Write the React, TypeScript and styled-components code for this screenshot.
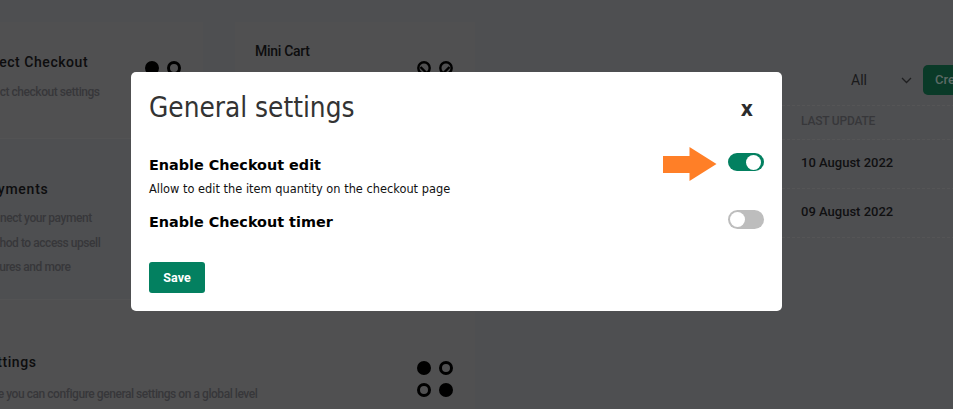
import React from 'react'
import styled, { createGlobalStyle } from 'styled-components'

const GlobalStyle = createGlobalStyle`
  html, body {
    margin: 0;
    padding: 0;
    width: 953px;
    height: 409px;
    overflow: hidden;
    background: #4e4f51;
    font-family: 'Roboto', 'Liberation Sans', sans-serif;
  }
`

const RingIcon = ({ flip }: { flip?: boolean }) => (
  <svg width="14" height="14" viewBox="0 0 14 14" fill="none">
    <circle cx="7" cy="7" r="5.7" stroke="#000" strokeWidth="2.4" />
    <path d={flip ? 'M10.5 6 4.5 12' : 'M3.5 6 9.5 12'} stroke="#000" strokeWidth="2.4" />
  </svg>
)

export default function App() {
  return (
    <>
      <GlobalStyle />
      <Page>
        <CardsArea>
          <TopRow>
            <CheckoutCard>
              <CardText>
                <CheckoutTitle>Direct Checkout</CheckoutTitle>
                <CardDesc>Direct checkout settings</CardDesc>
              </CardText>
              <Dots>
                <Dot $filled />
                <Dot />
              </Dots>
            </CheckoutCard>
            <MiniCartCard>
              <MiniCartTitle>Mini Cart</MiniCartTitle>
              <MiniCartDots>
                <RingIcon />
                <RingIcon flip />
              </MiniCartDots>
            </MiniCartCard>
          </TopRow>
          <PaymentsCard>
            <PaymentsTitle>Payments</PaymentsTitle>
            <CardDesc>Connect your payment</CardDesc>
            <CardDesc>method to access upsell</CardDesc>
            <CardDesc>features and more</CardDesc>
          </PaymentsCard>
          <SettingsCard>
            <CardText>
              <SettingsCardTitle>Settings</SettingsCardTitle>
              <CardDesc>Here you can configure general settings on a global level</CardDesc>
            </CardText>
            <DotGrid>
              <Dot $filled />
              <Dot />
              <Dot />
              <Dot $filled />
            </DotGrid>
          </SettingsCard>
        </CardsArea>
        <TablePanel>
          <Toolbar>
            <FilterSelect>
              <span>All</span>
              <svg width="11" height="7" viewBox="0 0 11 7" fill="none">
                <path d="M1 1 5.5 5.5 10 1" stroke="#1f1f20" strokeWidth="1.3" />
              </svg>
            </FilterSelect>
            <CreateButton>Create</CreateButton>
          </Toolbar>
          <TableRow $header>LAST UPDATE</TableRow>
          <TableRow>10 August 2022</TableRow>
          <TableRow>09 August 2022</TableRow>
        </TablePanel>
      </Page>
      <Modal>
        <ModalHeader>
          <ModalTitle>General settings</ModalTitle>
          <CloseButton>x</CloseButton>
        </ModalHeader>
        <SettingRow>
          <SettingTitle>Enable Checkout edit</SettingTitle>
          <Toggle $on />
        </SettingRow>
        <SettingHint>Allow to edit the item quantity on the checkout page</SettingHint>
        <SettingRow>
          <SettingTitle>Enable Checkout timer</SettingTitle>
          <Toggle />
        </SettingRow>
        <SaveButton>Save</SaveButton>
      </Modal>
      <ArrowMark width="54" height="36" viewBox="0 0 54 36">
        <path d="M0 10H26.5V1L53.5 18 26.5 35V27H0Z" fill="#ff7f27" />
      </ArrowMark>
    </>
  )
}

const Page = styled.div`
  display: flex;
  width: 1100px;
  height: 409px;
  margin-left: -20px;
  gap: 22px;
`

const CardsArea = styled.div`
  width: 495px;
  flex-shrink: 0;
  display: flex;
  flex-direction: column;
`

const TopRow = styled.div`
  display: flex;
  gap: 32px;
  height: 138px;
  padding-top: 22px;
  box-sizing: border-box;
`

const CheckoutCard = styled.div`
  width: 223px;
  box-sizing: border-box;
  display: flex;
  justify-content: space-between;
  padding: 31px 22px 0 0;
  background: #505051;
`

const MiniCartCard = styled.div`
  flex: 1;
  display: flex;
  justify-content: space-between;
  align-items: flex-start;
  padding: 20px 22px 0 20px;
  background: #505051;
`

const CardText = styled.div`
  display: flex;
  flex-direction: column;
`

const CardTitle = styled.div`
  font-size: 14px;
  line-height: 18px;
  font-weight: 500;
  color: #0d0d0e;
  white-space: nowrap;
`

const CheckoutTitle = styled(CardTitle)`
  margin-bottom: 9px;
  letter-spacing: 0.55px;
`

const MiniCartTitle = styled(CardTitle)`
  letter-spacing: -0.3px;
`

const PaymentsTitle = styled(CardTitle)`
  margin-bottom: 8px;
  letter-spacing: 0.75px;
`

const SettingsCardTitle = styled(CardTitle)`
  margin-bottom: 11px;
  letter-spacing: 0.6px;
`

const CardDesc = styled.div`
  font-size: 12px;
  line-height: 24.5px;
  font-weight: 500;
  letter-spacing: -0.45px;
  color: #37373a;
  white-space: nowrap;
`

const Dots = styled.div`
  display: flex;
  gap: 8px;
  align-self: flex-start;
  margin-top: 8px;
`

const MiniCartDots = styled.div`
  display: flex;
  gap: 8px;
  margin-top: 19px;
`

const DotGrid = styled.div`
  display: grid;
  grid-template-columns: 14px 14px;
  gap: 8px;
  align-self: flex-start;
  margin-top: 8px;
`

const Dot = styled.span<{ $filled?: boolean }>`
  display: block;
  width: 14px;
  height: 14px;
  box-sizing: border-box;
  border-radius: 50%;
  border: 3px solid #000;
  background: ${(p) => (p.$filled ? '#000' : 'transparent')};
`

const PaymentsCard = styled.div`
  height: 162px;
  padding-top: 41px;
  box-sizing: border-box;
  border-top: 1px solid #535354;
  border-bottom: 1px solid #535354;
`

const SettingsCard = styled.div`
  flex: 1;
  display: flex;
  justify-content: space-between;
  padding: 53px 22px 0 0;
  background: #505051;
`

const TablePanel = styled.div`
  flex: 1;
  padding-top: 65px;
`

const Toolbar = styled.div`
  display: flex;
  align-items: center;
  height: 30px;
  padding-left: 354px;
  margin-bottom: 10px;
`

const FilterSelect = styled.div`
  display: flex;
  align-items: center;
  justify-content: space-between;
  width: 61px;
  margin-right: 11px;
  font-size: 14px;
  color: #1a1a1b;
`

const CreateButton = styled.div`
  width: 72px;
  height: 30px;
  line-height: 30px;
  padding-left: 12px;
  border-radius: 5px;
  font-size: 13px;
  font-weight: 500;
  color: #5d6a66;
  background: #0a3a28;
`

const TableRow = styled.div<{ $header?: boolean }>`
  height: ${(p) => (p.$header ? '33px' : '48px')};
  line-height: ${(p) => (p.$header ? '30px' : '46px')};
  padding-left: 304px;
  border-top: 1px dashed #555556;
  font-size: ${(p) => (p.$header ? '12px' : '13px')};
  font-weight: 500;
  letter-spacing: ${(p) => (p.$header ? '-0.2px' : '0')};
  color: ${(p) => (p.$header ? '#37373a' : '#101011')};

  &:last-child {
    border-bottom: 1px dashed #555556;
  }
`

const Modal = styled.div`
  position: absolute;
  left: 131px;
  top: 72px;
  width: 651px;
  height: 239px;
  box-sizing: border-box;
  padding: 0 18px;
  background: #fff;
  border-radius: 5px;
  font-family: 'DejaVu Sans', Verdana, sans-serif;
  color: #000;
`

const ModalHeader = styled.div`
  display: flex;
  justify-content: space-between;
  align-items: center;
  height: 78px;
  padding-bottom: 7px;
  box-sizing: border-box;
`

const ModalTitle = styled.h2`
  margin: 0;
  font-family: 'DejaVu Sans Condensed', 'DejaVu Sans', sans-serif;
  font-stretch: condensed;
  font-size: 27.7px;
  font-weight: 400;
  color: #333;
`

const CloseButton = styled.span`
  margin-right: 11px;
  margin-top: 2px;
  font-family: 'DejaVu Sans Condensed', 'DejaVu Sans', sans-serif;
  font-stretch: condensed;
  font-size: 21px;
  font-weight: 700;
  color: #2b2b2b;
`

const SettingRow = styled.div`
  display: flex;
  justify-content: space-between;
  align-items: center;
  height: 29px;
`

const SettingTitle = styled.div`
  font-size: 14.4px;
  font-weight: 700;
  color: #000;
`

const SettingHint = styled.div`
  font-size: 11.4px;
  line-height: 20px;
  margin-bottom: 8px;
  color: #111;
`

const Toggle = styled.span<{ $on?: boolean }>`
  position: relative;
  display: block;
  width: 36px;
  height: ${(p) => (p.$on ? '18px' : '19px')};
  margin-bottom: 5px;
  border-radius: 10px;
  background: ${(p) => (p.$on ? '#038060' : '#bdbdbd')};

  &::after {
    content: '';
    position: absolute;
    top: ${(p) => (p.$on ? '1.5px' : '2px')};
    left: ${(p) => (p.$on ? '18px' : '2px')};
    width: 15px;
    height: 15px;
    border-radius: 50%;
    background: #fff;
  }
`

const SaveButton = styled.button`
  display: block;
  margin-top: 26px;
  width: 56px;
  height: 31px;
  padding: 0;
  border: none;
  border-radius: 3px;
  background: #038060;
  color: #fff;
  font-family: 'Roboto', 'Liberation Sans', sans-serif;
  font-size: 12.5px;
  font-weight: 700;
`

const ArrowMark = styled.svg`
  position: absolute;
  left: 663px;
  top: 146px;
`
